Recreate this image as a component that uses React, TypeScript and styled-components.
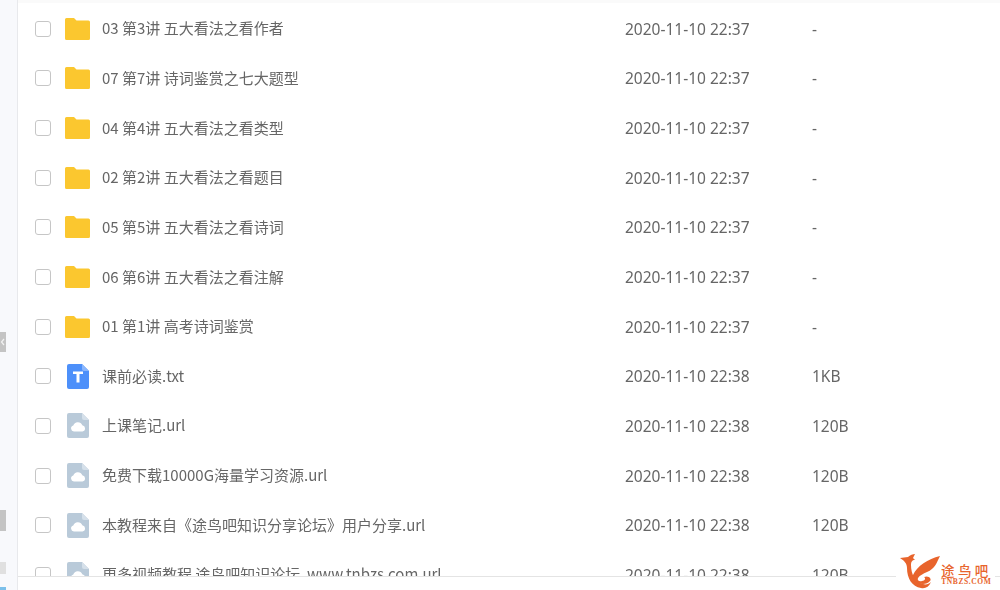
import React from 'react';
import styled, { createGlobalStyle } from 'styled-components';

interface IFile {
  name: string;
  time: string;
  size: string;
  kind: 'folder' | 'txt' | 'url';
}

const files: IFile[] = [
  { name: '03 第3讲 五大看法之看作者', time: '2020-11-10 22:37', size: '-', kind: 'folder' },
  { name: '07 第7讲 诗词鉴赏之七大题型', time: '2020-11-10 22:37', size: '-', kind: 'folder' },
  { name: '04 第4讲 五大看法之看类型', time: '2020-11-10 22:37', size: '-', kind: 'folder' },
  { name: '02 第2讲 五大看法之看题目', time: '2020-11-10 22:37', size: '-', kind: 'folder' },
  { name: '05 第5讲 五大看法之看诗词', time: '2020-11-10 22:37', size: '-', kind: 'folder' },
  { name: '06 第6讲 五大看法之看注解', time: '2020-11-10 22:37', size: '-', kind: 'folder' },
  { name: '01 第1讲 高考诗词鉴赏', time: '2020-11-10 22:37', size: '-', kind: 'folder' },
  { name: '课前必读.txt', time: '2020-11-10 22:38', size: '1KB', kind: 'txt' },
  { name: '上课笔记.url', time: '2020-11-10 22:38', size: '120B', kind: 'url' },
  { name: '免费下载10000G海量学习资源.url', time: '2020-11-10 22:38', size: '120B', kind: 'url' },
  { name: '本教程来自《途鸟吧知识分享论坛》用户分享.url', time: '2020-11-10 22:38', size: '120B', kind: 'url' },
  { name: '更多视频教程 途鸟吧知识论坛\u00a0 www.tnbzs.com.url', time: '2020-11-10 22:38', size: '120B', kind: 'url' },
];

function FileIcon({ kind }: { kind: IFile['kind'] }) {
  if (kind === 'folder') {
    return (
      <svg width="25" height="22" viewBox="0 0 25 22">
        <path d="M1.5 0H9L11.5 2.6H23.5A1.5 1.5 0 0 1 25 4.1V20.5A1.5 1.5 0 0 1 23.5 22H1.5A1.5 1.5 0 0 1 0 20.5V1.5A1.5 1.5 0 0 1 1.5 0Z" fill="#fbc72f" />
      </svg>
    );
  }
  if (kind === 'txt') {
    return (
      <svg width="22" height="25" viewBox="0 0 22 25">
        <path d="M2 0H15L22 7V23A2 2 0 0 1 20 25H2A2 2 0 0 1 0 23V2A2 2 0 0 1 2 0Z" fill="#4d90fa" />
        <path d="M15 0L22 7H17A2 2 0 0 1 15 5Z" fill="#8ab6fc" />
        <path d="M6 7.5H16V10H12.5V18.5H9.5V10H6Z" fill="#fff" />
      </svg>
    );
  }
  return (
    <svg width="22" height="25" viewBox="0 0 22 25">
      <path d="M2 0H15L22 7V23A2 2 0 0 1 20 25H2A2 2 0 0 1 0 23V2A2 2 0 0 1 2 0Z" fill="#b9cad9" />
      <path d="M15 0L22 7H17A2 2 0 0 1 15 5Z" fill="#d5e0ea" />
      <path d="M7 18.5A3 3 0 0 1 6.3 12.6A4.8 4.8 0 0 1 15.3 12.2A3.2 3.2 0 0 1 15.5 18.5Z" fill="#fff" />
    </svg>
  );
}

function Logo() {
  return (
    <svg width="41" height="36" viewBox="0 0 41 36">
      <path d="M0 4L8 3C10 1 13 0 15 0L13 4L15 6C12 6 11 8 11 11C11 20 15 28 23 30C26 31 29 30 31 28C29 33 25 35 21 34C12 33 7 24 7 14C7 10 5 7 0 4Z" fill="#e8642c" />
      <path d="M13 21C17 12 28 5 40 2C37 8 35 15 27 18C23 20 20 21 18 24C17 26 19 28 22 27C25 27 26 24 24 23C29 21 32 25 30 27C27 31 19 31 15 27C13 25 12 23 13 21Z" fill="#e8642c" />
    </svg>
  );
}

export default function App() {
  return (
    <Page>
      <GlobalStyle />
      <Rail>
        <RailThumb top={332} height={20}>
          <svg width="6" height="20" viewBox="0 0 6 20">
            <path d="M4 7L1.5 10L4 13" fill="none" stroke="#f2f2f2" strokeWidth="1.2" />
          </svg>
        </RailThumb>
        <RailThumb top={510} height={21} />
        <RailThumb top={562} height={12} light />
        <RailMark />
      </Rail>
      <Main>
        <List>
          {files.map((file) => (
            <Row key={file.name}>
              <Checkbox />
              <IconCell>
                <FileIcon kind={file.kind} />
              </IconCell>
              <Name>{file.name}</Name>
              <Time>{file.time}</Time>
              <Size>{file.size}</Size>
            </Row>
          ))}
        </List>
      </Main>
      <Watermark>
        <Logo />
        <Brand>
          <BrandName>途鸟吧</BrandName>
          <BrandUrl>TNBZS.COM</BrandUrl>
        </Brand>
      </Watermark>
    </Page>
  );
}

const GlobalStyle = createGlobalStyle`
  html, body {
    margin: 0;
    padding: 0;
    background: #fff;
    overflow: hidden;
  }
`;

const Page = styled.div`
  position: relative;
  display: flex;
  width: 1000px;
  height: 590px;
  overflow: hidden;
  background: #fff;
  font-family: 'Noto Sans', 'Noto Sans CJK SC', sans-serif;
`;

const Rail = styled.div`
  position: relative;
  flex: 0 0 18px;
  box-sizing: border-box;
  background: #f8f9fc;
  border-right: 1px solid #e8e9ec;
`;

const RailThumb = styled.div<{ top: number; height: number; light?: boolean }>`
  position: absolute;
  left: 0;
  top: ${({ top }) => `${top}px`};
  display: flex;
  width: 6px;
  height: ${({ height }) => `${height}px`};
  background: ${({ light }) => (light ? '#e0e0e0' : '#c4c4c4')};
`;

const RailMark = styled.div`
  position: absolute;
  left: 0;
  top: 587px;
  width: 6px;
  height: 3px;
  background: #7cc0ea;
`;

const Main = styled.div`
  flex: 1;
  height: 577px;
  overflow: hidden;
  box-sizing: border-box;
  border-top: 3px solid #fafafa;
  border-bottom: 1px solid #e4e4e4;
`;

const List = styled.div`
  display: flex;
  flex-direction: column;
  padding-top: 1px;
  filter: blur(0.35px);
`;

const Row = styled.div`
  display: flex;
  align-items: center;
  flex: 0 0 49.65px;
  height: 49.65px;
  padding-left: 17px;
  color: #666;
`;

const Checkbox = styled.span`
  flex: 0 0 16px;
  box-sizing: border-box;
  height: 16px;
  border: 1.5px solid #c6c6c6;
  border-radius: 3px;
  background: #fff;
`;

const IconCell = styled.div`
  display: flex;
  justify-content: center;
  align-items: center;
  flex: 0 0 25px;
  height: 26px;
  margin-left: 14px;
`;

const Name = styled.div`
  flex: 0 0 523px;
  margin-left: 12px;
  margin-top: -2px;
  font-family: 'Noto Sans CJK SC', 'Noto Sans', sans-serif;
  font-size: 15px;
  white-space: nowrap;
`;

const Time = styled.div`
  flex: 0 0 187px;
  font-size: 15.5px;
`;

const Size = styled.div`
  flex: 1;
  font-size: 15.5px;
`;

const Watermark = styled.div`
  position: absolute;
  left: 896px;
  bottom: 0;
  display: flex;
  align-items: flex-end;
  width: 99px;
  height: 36px;
  padding-left: 4px;
  box-sizing: border-box;
  background: #fff;
`;

const Brand = styled.div`
  display: flex;
  flex-direction: column;
  align-items: center;
  margin-bottom: 5px;
`;

const BrandName = styled.div`
  color: #e8642c;
  font-family: 'Noto Sans CJK SC', sans-serif;
  font-size: 13.5px;
  font-weight: 500;
  line-height: 13px;
  letter-spacing: 3.4px;
`;

const BrandUrl = styled.div`
  margin-top: 1px;
  color: #e8642c;
  font-family: 'Liberation Serif', serif;
  font-size: 7.5px;
  line-height: 7px;
  font-weight: 700;
  letter-spacing: 0.6px;
`;
